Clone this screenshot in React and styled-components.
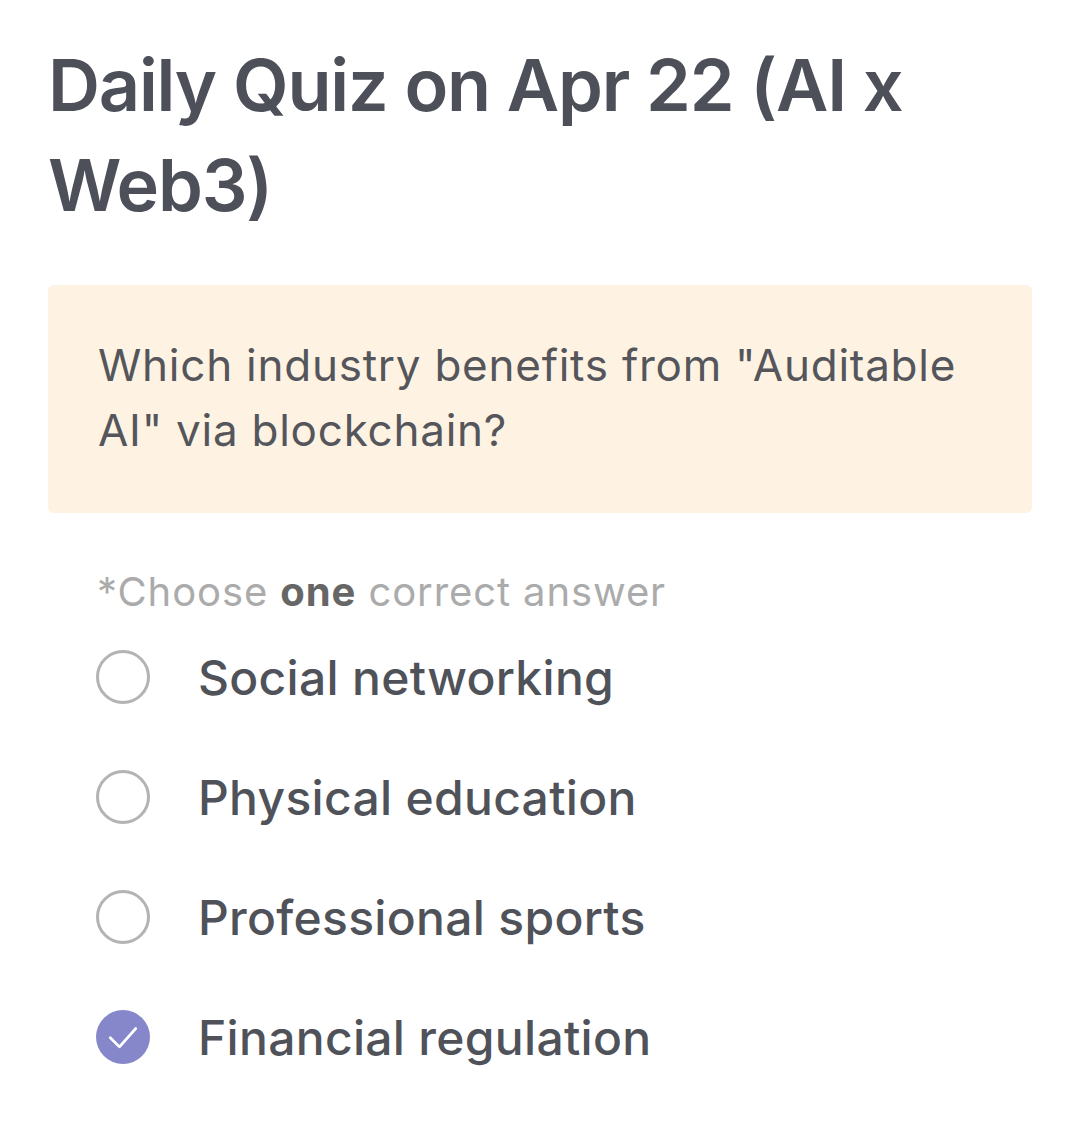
import React, { useState } from 'react';
import styled, { createGlobalStyle } from 'styled-components';

const GlobalStyle = createGlobalStyle`
    html, body {
        margin: 0;
        padding: 0;
        background: #ffffff;
    }
    body {
        font-family: Inter, "Noto Sans", sans-serif;
    }
`;

const Page = styled.div`
    width: 1080px;
    min-height: 1145px;
    box-sizing: border-box;
    padding: 35px 48px 0 48px;
`;

const Title = styled.h1`
    margin: 0;
    font-size: 72px;
    line-height: 100px;
    font-weight: 600;
    letter-spacing: -1.2px;
    color: #4d5059;
    max-width: 900px;
`;

const QuestionBox = styled.div`
    margin-top: 50px;
    background: #fef3e2;
    border-radius: 6px;
    padding: 48px 50px 50px 50px;
`;

const QuestionText = styled.p`
    margin: 0;
    font-size: 44px;
    line-height: 65px;
    font-weight: 400;
    letter-spacing: 0.75px;
    color: #55565c;
`;

const Hint = styled.p`
    margin: 54px 0 0 49px;
    font-size: 40px;
    line-height: 50px;
    letter-spacing: 0.9px;
    color: #ababab;

    b {
        color: #666;
        font-weight: 700;
    }
`;

const Options = styled.ul`
    list-style: none;
    margin: 0;
    padding: 0 0 0 48px;
`;

const Option = styled.li`
    display: flex;
    align-items: center;
    gap: 48px;
    height: 120px;
    cursor: pointer;
`;

const Radio = styled.span`
    flex: none;
    width: 54px;
    height: 54px;
    box-sizing: border-box;
    border-radius: 50%;
    border: ${p => (p.$checked ? 'none' : '3px solid #b3b3b3')};
    background: ${p => (p.$checked ? '#8687cb' : 'transparent')};
    display: flex;
    align-items: center;
    justify-content: center;
`;

const Label = styled.span`
    font-size: 48px;
    font-weight: 500;
    letter-spacing: 0.3px;
    color: #50525a;
`;

const Check = () => (
    <svg width="34" height="34" viewBox="0 0 24 24" fill="none" stroke="#fff" strokeWidth="1.9" strokeLinecap="round" strokeLinejoin="round">
        <path d="M3 12.5l6.5 6.5L21 6" />
    </svg>
);

const answers = [
    'Social networking',
    'Physical education',
    'Professional sports',
    'Financial regulation'
];

const App = () => {
    const [selected, setSelected] = useState(3);

    return (
        <Page>
            <GlobalStyle />
            <Title>Daily Quiz on Apr 22 (AI x Web3)</Title>

            <QuestionBox>
                <QuestionText>Which industry benefits from "Auditable AI" via blockchain?</QuestionText>
            </QuestionBox>

            <Hint>*Choose <b>one</b> correct answer</Hint>

            <Options>
                {answers.map((answer, i) => (
                    <Option key={answer} onClick={() => setSelected(i)}>
                        <Radio $checked={selected === i}>
                            {selected === i && <Check />}
                        </Radio>
                        <Label>{answer}</Label>
                    </Option>
                ))}
            </Options>
        </Page>
    );
};

export default App;
